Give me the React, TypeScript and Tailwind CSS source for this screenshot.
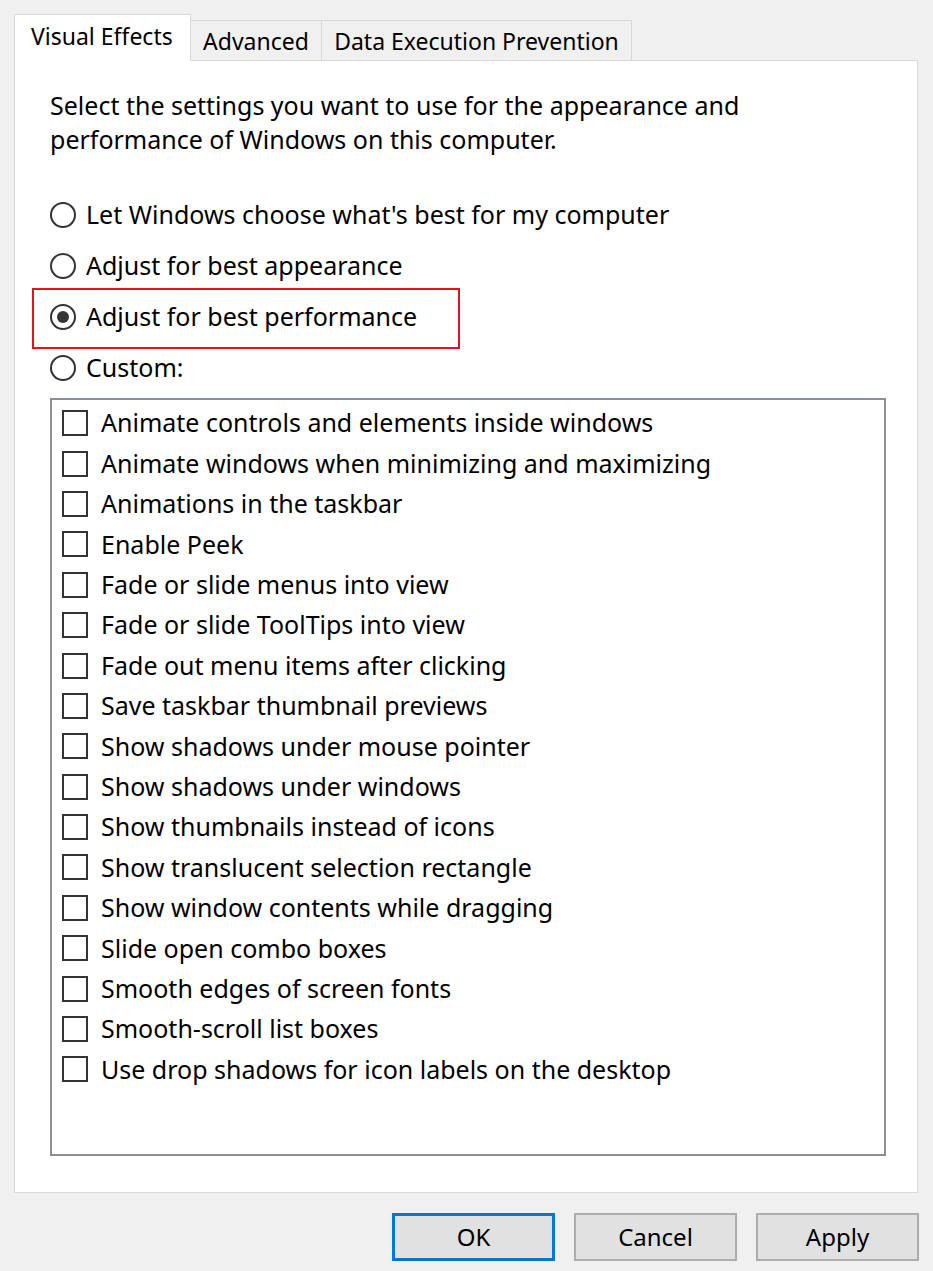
import React from "react";

const options = [
  "Animate controls and elements inside windows",
  "Animate windows when minimizing and maximizing",
  "Animations in the taskbar",
  "Enable Peek",
  "Fade or slide menus into view",
  "Fade or slide ToolTips into view",
  "Fade out menu items after clicking",
  "Save taskbar thumbnail previews",
  "Show shadows under mouse pointer",
  "Show shadows under windows",
  "Show thumbnails instead of icons",
  "Show translucent selection rectangle",
  "Show window contents while dragging",
  "Slide open combo boxes",
  "Smooth edges of screen fonts",
  "Smooth-scroll list boxes",
  "Use drop shadows for icon labels on the desktop",
];

function Radio({ label, checked }: { label: string; checked?: boolean }) {
  return (
    <div className="flex items-center h-[51px]">
      <span className="w-[26px] h-[26px] rounded-full border-2 border-[#333] bg-white flex items-center justify-center">
        {checked && <span className="w-[12px] h-[12px] rounded-full bg-[#333]" />}
      </span>
      <span className="ml-[10px]">{label}</span>
    </div>
  );
}

function Check({ label }: { label: string }) {
  return (
    <div className="flex items-center h-[40.4px]">
      <span className="w-[26px] h-[26px] border-2 border-[#333] bg-white" />
      <span className="ml-[13px]">{label}</span>
    </div>
  );
}

export default function App() {
  return (
    <div className="w-[933px] h-[1271px] bg-[#f0f0f0] text-black text-[25px] font-['Noto_Sans',sans-serif] pt-[14px] pl-[14px]">
      {/* Tabs */}
      <div className="flex items-end h-[47px] text-[23px]">
        <div className="relative z-10 w-[177px] h-[47px] bg-white border border-b-0 border-[#d9d9d9] flex items-center pl-[16px] pb-[4px]">
          Visual Effects
        </div>
        <div className="w-[131px] h-[41px] border border-l-0 border-b-0 border-[#d9d9d9] flex items-center justify-center">
          Advanced
        </div>
        <div className="w-[310px] h-[41px] border border-l-0 border-b-0 border-[#d9d9d9] flex items-center justify-center">
          Data Execution Prevention
        </div>
      </div>

      {/* Panel */}
      <div className="w-[904px] h-[1133px] -mt-px bg-white border border-[#d9d9d9] pl-[35px] pt-[27px]">
        <p className="leading-[34px] w-[740px]">
          Select the settings you want to use for the appearance and performance of Windows on this computer.
        </p>

        <div className="mt-[33px]">
          <Radio label="Let Windows choose what's best for my computer" />
          <Radio label="Adjust for best appearance" />
          <div className="-ml-[18px] w-[428px] h-[61px] border-2 border-[#e81123] pl-[16px] pt-px -mt-[3px] -mb-[7px]">
            <Radio label="Adjust for best performance" checked />
          </div>
          <Radio label="Custom:" />
        </div>

        <div className="mt-[5px] w-[836px] h-[758px] border-2 border-[#8a8f96] pl-[10px] pt-[3px]">
          {options.map((o) => (
            <Check key={o} label={o} />
          ))}
        </div>
      </div>

      {/* Buttons */}
      <div className="flex justify-end gap-[19px] pr-[14px] mt-[20px] w-[919px] text-[24px]">
        <button className="w-[163px] h-[48px] bg-[#e1e1e1] border-[3px] border-[#0078d7]">OK</button>
        <button className="w-[163px] h-[48px] bg-[#e1e1e1] border-2 border-[#adadad]">Cancel</button>
        <button className="w-[163px] h-[48px] bg-[#e1e1e1] border-2 border-[#adadad]">Apply</button>
      </div>
    </div>
  );
}
